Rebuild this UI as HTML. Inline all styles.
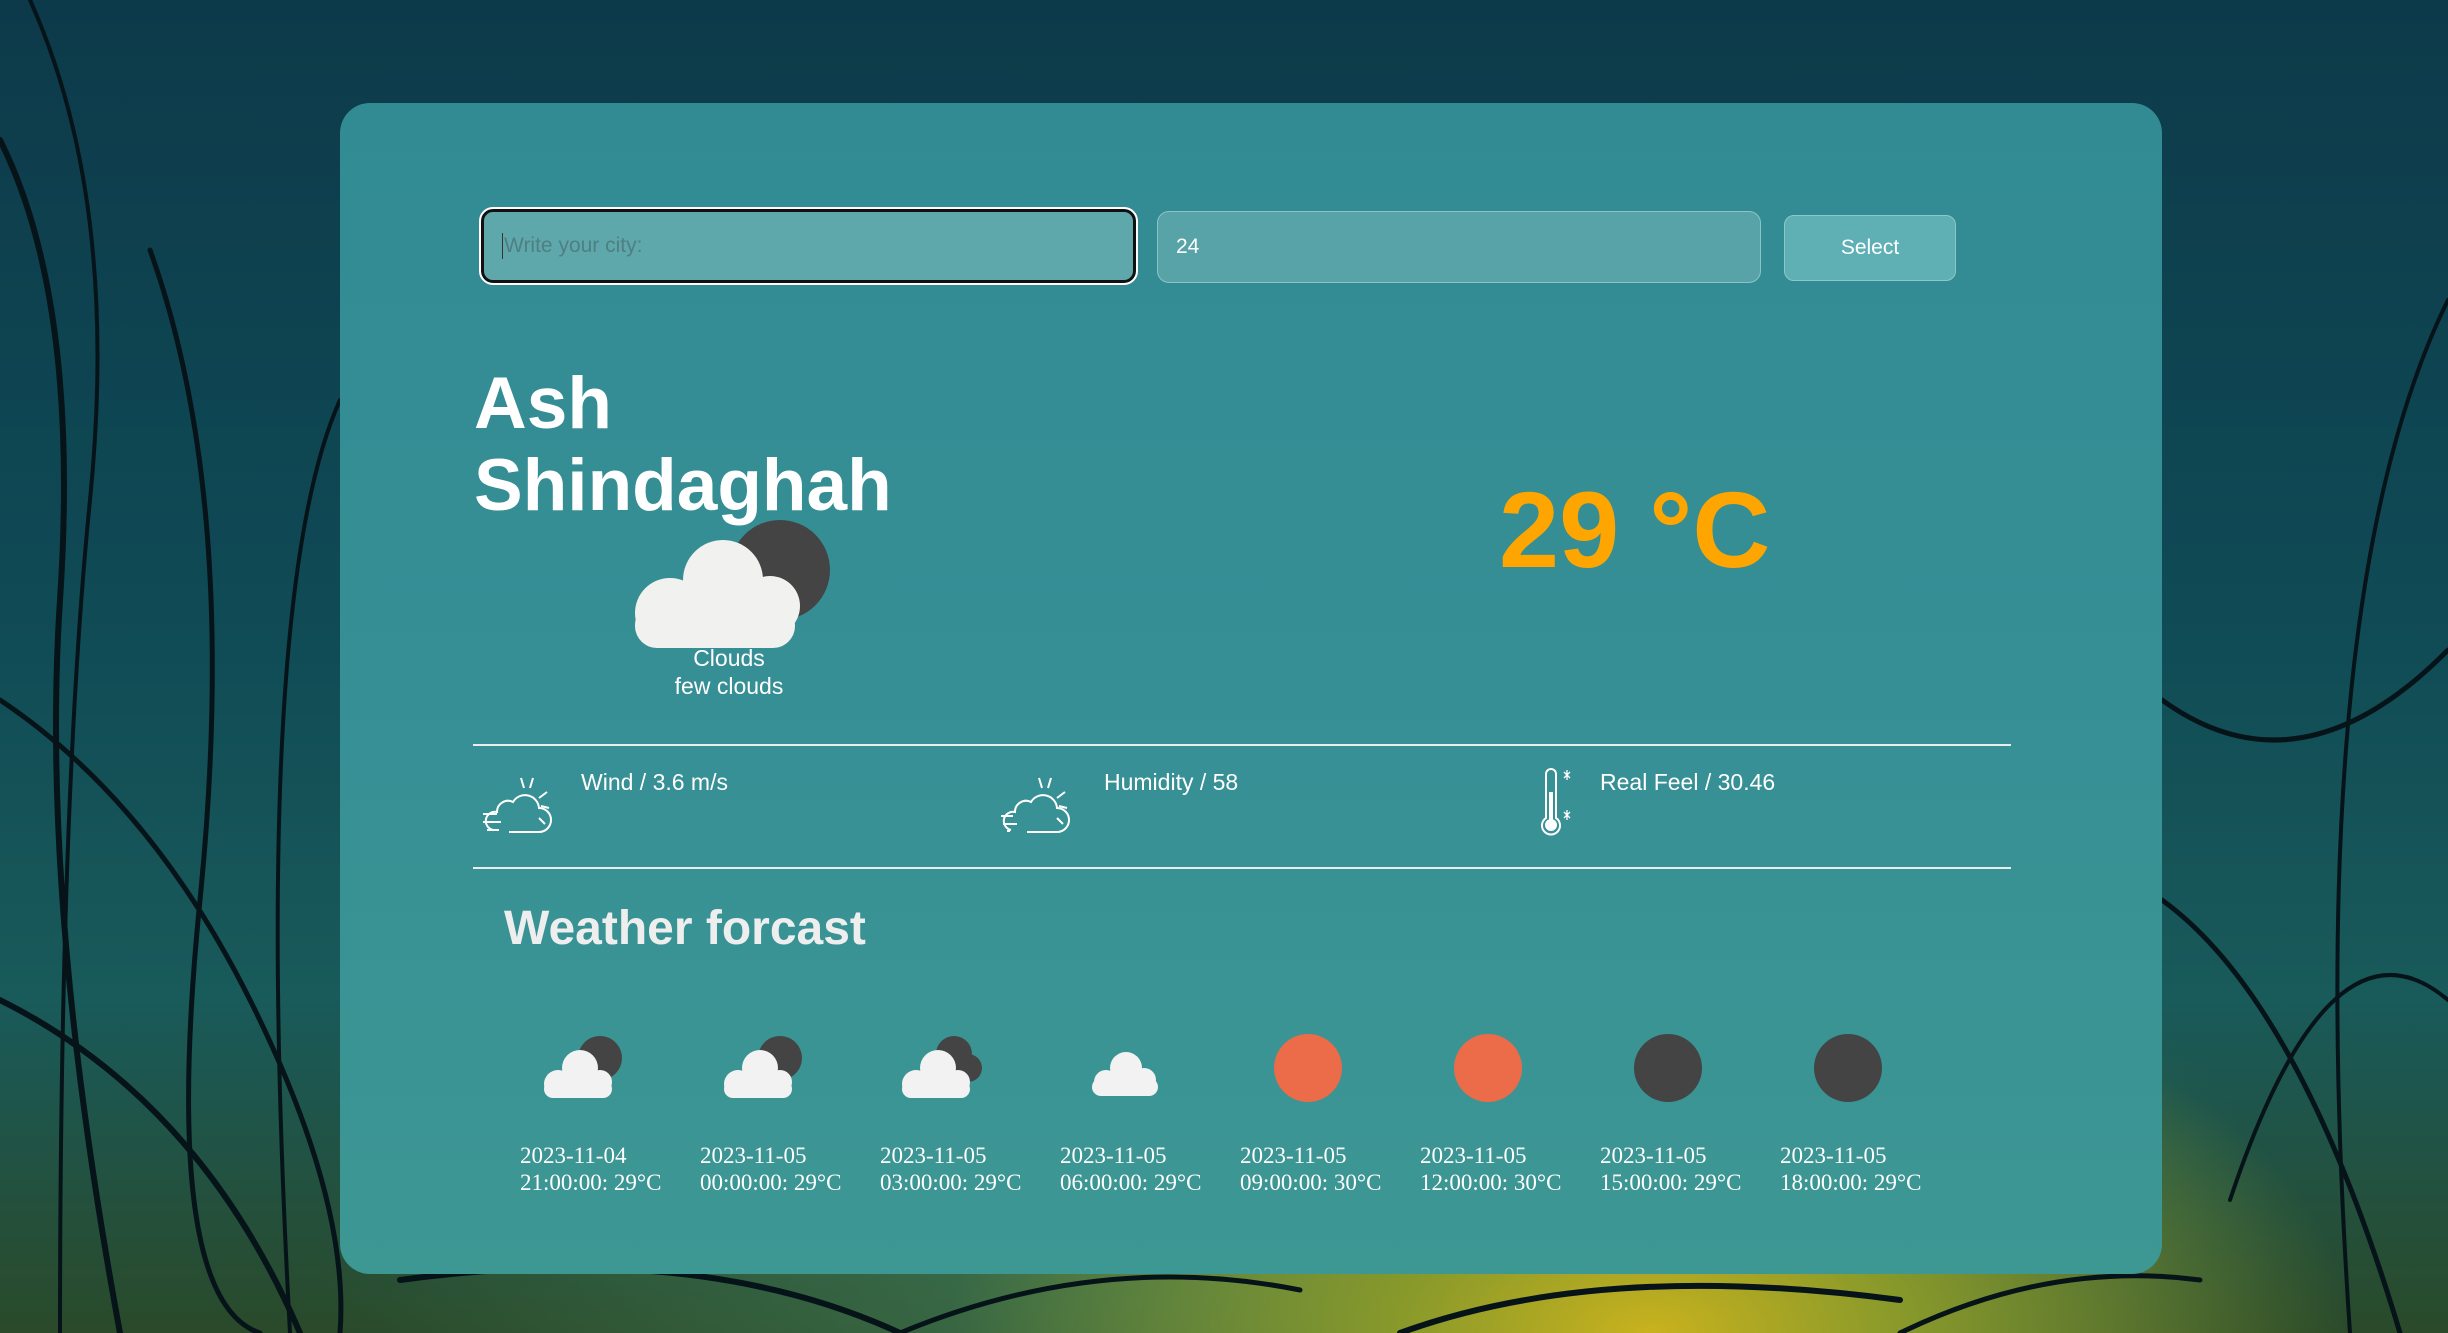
<!DOCTYPE html>
<html><head><meta charset="utf-8"><style>
html,body{margin:0;padding:0;width:2448px;height:1333px;overflow:hidden;font-family:"Liberation Sans",sans-serif}
body{background:
radial-gradient(ellipse 700px 380px at 1650px 1333px,#c9b21e 0%,#8a9a2a 35%,rgba(60,110,70,0) 100%),
radial-gradient(ellipse 1400px 700px at 1300px 1250px,rgba(70,130,90,.8),rgba(20,70,80,0) 70%),
linear-gradient(180deg,#0d3a4a 0%,#0f4a55 45%,#195a5a 75%,#2a4a2a 100%);position:relative}
.grass{position:absolute;left:0;top:0}
.card{position:absolute;left:340px;top:103px;width:1822px;height:1171px;border-radius:30px;
background:linear-gradient(180deg,#328b93 0%,#368f95 50%,#3d9793 100%);}
.in{position:absolute;box-sizing:border-box;font-size:21px;padding-left:18px;display:flex;align-items:center}
.city{left:481px;top:209px;width:655px;height:74px;background:#5ea8ac;border:3px solid #111;border-radius:12px;outline:2px solid #fff;color:#4f7f82}
.city:before{content:"";width:1px;height:26px;background:#333;margin-right:1px}
.num{left:1157px;top:211px;width:604px;height:72px;background:#57a3a8;border:1px solid #8cc4c6;border-radius:12px;color:#fff}
.btn{position:absolute;left:1784px;top:215px;width:172px;height:66px;background:#5fb0b5;border:1px solid #8cc8ca;border-radius:10px;color:#fff;font-size:21px;display:flex;align-items:center;justify-content:center;box-sizing:border-box}
.name{position:absolute;left:474px;top:363px;color:#fff;font-weight:bold;font-size:73px;line-height:82px}
.temp{position:absolute;left:1499px;top:465px;color:#ffa500;font-weight:bold;font-size:108px;line-height:130px}
.desc{position:absolute;left:629px;width:200px;text-align:center;color:#fff;font-size:23px}
.hr{position:absolute;left:473px;width:1538px;height:2px;background:#e6eeee}
.lbl{position:absolute;top:769px;color:#fff;font-size:23px}
.h2{position:absolute;left:504px;top:901px;color:#eee;font-weight:bold;font-size:48px}
.fc{position:absolute;top:1030px;width:180px}
.fc svg{display:block;margin-left:22px}
.fc .t{position:absolute;left:0;top:112px;font-family:"Liberation Serif",serif;color:#fff;font-size:23px;line-height:27px;white-space:nowrap}
</style></head><body>
<svg class="grass" width="2448" height="1333" viewBox="0 0 2448 1333" fill="none" stroke="#06141a" stroke-linecap="round">
<path d="M0 140 Q80 300 60 600 T120 1333" stroke-width="6"/>
<path d="M30 0 Q120 200 90 500 T60 1333" stroke-width="4"/>
<path d="M150 250 Q240 500 200 900 T260 1333" stroke-width="5"/>
<path d="M0 700 Q150 800 250 1000 T340 1333" stroke-width="5"/>
<path d="M340 400 Q250 600 290 1333" stroke-width="4"/>
<path d="M0 1000 Q200 1100 300 1333" stroke-width="6"/>
<path d="M2162 700 Q2300 800 2448 650" stroke-width="5"/>
<path d="M2162 900 Q2300 1000 2400 1333" stroke-width="5"/>
<path d="M2230 1200 Q2330 900 2448 1000" stroke-width="4"/>
<path d="M2448 300 Q2300 600 2350 1333" stroke-width="4"/>
<path d="M400 1280 Q700 1240 900 1333" stroke-width="6"/>
<path d="M900 1333 Q1100 1250 1300 1290" stroke-width="5"/>
<path d="M1400 1333 Q1600 1260 1900 1300" stroke-width="6"/>
<path d="M1900 1333 Q2050 1260 2200 1280" stroke-width="5"/>
</svg>
<div class="card"></div>
<div class="in city">Write your city:</div>
<div class="in num">24</div>
<div class="btn">Select</div>
<div class="name">Ash<br>Shindaghah</div>
<svg style="position:absolute;left:630px;top:518px" width="205" height="135" viewBox="0 0 205 135">
<circle cx="150" cy="52" r="50" fill="#444"/>
<g fill="#f1f1ef"><circle cx="93" cy="62" r="40"/><circle cx="140" cy="88" r="30"/><circle cx="40" cy="95" r="35"/><rect x="5" y="85" width="160" height="45" rx="22"/></g>
</svg>
<div class="desc" style="top:645px">Clouds</div>
<div class="desc" style="top:673px">few clouds</div>
<div class="temp">29 °C</div>
<div class="hr" style="top:744px"></div>
<div class="hr" style="top:867px"></div>
<svg style="position:absolute;left:481px;top:776px" width="78" height="60" viewBox="0 0 78 60" fill="none" stroke="#fff" stroke-width="2">
<path d="M40 2 l3 10 M52 2 l-3 10 M66 16 l-8 6 M68 32 l-8-2 M64 48 l-6-6"/>
<path d="M28 56 h30 a12 12 0 0 0 0-24 a14 14 0 0 0-26-6 a11 11 0 0 0-16 10 a9 9 0 0 0-4 18"/>
<path d="M2 38 h14 M2 46 h18 M6 54 h12"/>
</svg>
<div class="lbl" style="left:581px">Wind / 3.6 m/s</div>
<svg style="position:absolute;left:999px;top:776px" width="78" height="60" viewBox="0 0 78 60" fill="none" stroke="#fff" stroke-width="2">
<path d="M40 2 l3 10 M52 2 l-3 10 M66 16 l-8 6 M68 32 l-8-2 M64 48 l-6-6"/>
<path d="M28 56 h30 a12 12 0 0 0 0-24 a14 14 0 0 0-26-6 a11 11 0 0 0-16 10 a9 9 0 0 0-4 18"/>
<path d="M2 40 h12 M4 48 h14 M8 55 h3"/>
</svg>
<div class="lbl" style="left:1104px">Humidity / 58</div>
<svg style="position:absolute;left:1538px;top:768px" width="36" height="68" viewBox="0 0 36 68" fill="none" stroke="#fff" stroke-width="2">
<path d="M8 50 V6 a5 5 0 0 1 10 0 V50 a9 9 0 1 1-10 0z"/>
<path d="M13 24 V56" stroke-width="4"/><circle cx="13" cy="57" r="5" fill="#fff"/>
<path d="M26 4 l6 6 M32 4 l-6 6 M29 2 v10 M26 44 l6 6 M32 44 l-6 6 M29 42 v10" stroke-width="1.3"/>
</svg>
<div class="lbl" style="left:1600px">Real Feel / 30.46</div>
<div class="h2">Weather forcast</div>

<div class="fc" style="left:520px"><svg width="90" height="80" viewBox="0 0 90 80"><circle cx="58" cy="28" r="22" fill="#444"/><g fill="#f2f2f2"><circle cx="38" cy="38" r="18"/><circle cx="58" cy="52" r="12"/><circle cx="16" cy="54" r="14"/><rect x="2" y="50" width="68" height="18" rx="9"/></g></svg><div class="t">2023-11-04<br>21:00:00: 29°C</div></div>
<div class="fc" style="left:700px"><svg width="90" height="80" viewBox="0 0 90 80"><circle cx="58" cy="28" r="22" fill="#444"/><g fill="#f2f2f2"><circle cx="38" cy="38" r="18"/><circle cx="58" cy="52" r="12"/><circle cx="16" cy="54" r="14"/><rect x="2" y="50" width="68" height="18" rx="9"/></g></svg><div class="t">2023-11-05<br>00:00:00: 29°C</div></div>
<div class="fc" style="left:880px"><svg width="90" height="80" viewBox="0 0 90 80"><g fill="#444"><circle cx="52" cy="24" r="18"/><circle cx="66" cy="38" r="14"/></g><g fill="#f2f2f2"><circle cx="36" cy="38" r="18"/><circle cx="56" cy="52" r="12"/><circle cx="14" cy="54" r="14"/><rect x="0" y="50" width="68" height="18" rx="9"/></g></svg><div class="t">2023-11-05<br>03:00:00: 29°C</div></div>
<div class="fc" style="left:1060px"><svg width="90" height="80" viewBox="0 0 90 80"><g fill="#f2f2f2"><circle cx="44" cy="38" r="16"/><circle cx="62" cy="50" r="12"/><circle cx="24" cy="52" r="12"/><rect x="10" y="48" width="66" height="18" rx="9"/></g></svg><div class="t">2023-11-05<br>06:00:00: 29°C</div></div>
<div class="fc" style="left:1240px"><svg width="90" height="80" viewBox="0 0 90 80"><circle cx="46" cy="38" r="34" fill="#ec6b49"/></svg><div class="t">2023-11-05<br>09:00:00: 30°C</div></div>
<div class="fc" style="left:1420px"><svg width="90" height="80" viewBox="0 0 90 80"><circle cx="46" cy="38" r="34" fill="#ec6b49"/></svg><div class="t">2023-11-05<br>12:00:00: 30°C</div></div>
<div class="fc" style="left:1600px"><svg width="90" height="80" viewBox="0 0 90 80"><circle cx="46" cy="38" r="34" fill="#444"/></svg><div class="t">2023-11-05<br>15:00:00: 29°C</div></div>
<div class="fc" style="left:1780px"><svg width="90" height="80" viewBox="0 0 90 80"><circle cx="46" cy="38" r="34" fill="#444"/></svg><div class="t">2023-11-05<br>18:00:00: 29°C</div></div>
</body></html>
